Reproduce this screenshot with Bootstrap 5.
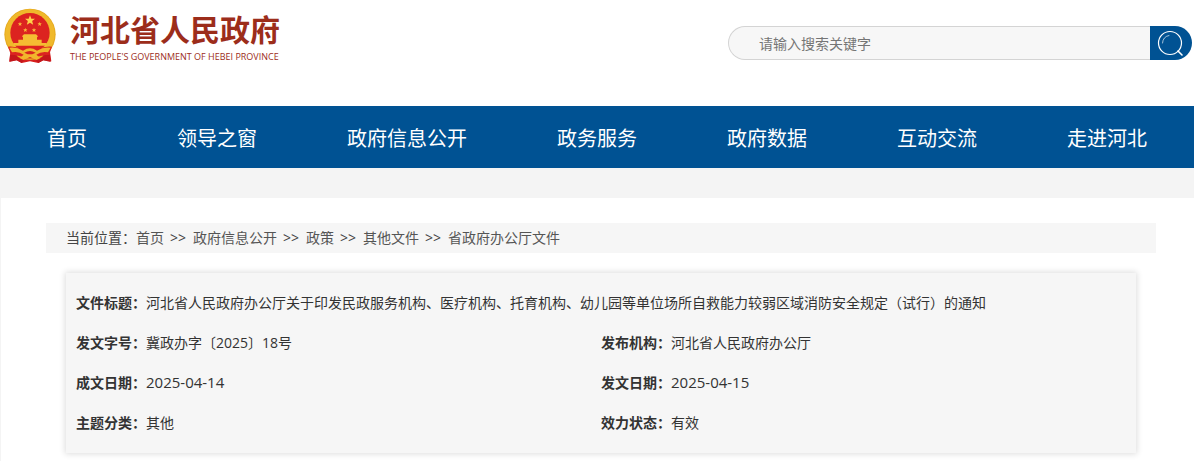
<!DOCTYPE html>
<html lang="zh-CN">
<head>
<meta charset="utf-8">
<meta name="viewport" content="width=device-width, initial-scale=1">
<title>河北省人民政府</title>
<link href="https://cdn.jsdelivr.net/npm/bootstrap@5.3.0/dist/css/bootstrap.min.css" rel="stylesheet">
<style>
  body { background: #f4f4f4; color: #333; font: 14px/30px "Open Sans", "Noto Sans CJK SC", sans-serif; }
  a { text-decoration: none; }
  .site-head { min-height: 106px; }
  .site-name { font-size: 30px; line-height: 34px; font-weight: 700; color: #9c2d1b; margin-top: 13px; }
  .site-sub { font-size: 9px; line-height: 20px; font-weight: 500; color: #9c2d1b; }
  .emblem { width: 70px; height: 70px; }
  .search { flex: 0 1 464px; height: 34px; margin: 26px 2px 0 0; }
  .search .form-control { background: #f7f7f7; border: 1px solid #d4d4d4; border-right: 0; border-radius: 17px 0 0 17px; padding: 0 30px; font-size: 14px; color: #555; }
  .search .form-control::placeholder { color: #757575; }
  .search .btn { width: 42px; background: #005293; border-radius: 0 17px 17px 0; }
  .main-nav { background: #005293; }
  .main-nav ul { column-gap: 90px; }
  .main-nav a { display: block; font-size: 20px; line-height: 58px; padding-top: 4px; color: #fff; }
  .panel { margin: 30px 0 0 1px; padding: 25px 38px 20px 45px; background: #fff; }
  .crumbs { background: #f6f6f6; padding: 0 20px; color: #444; }
  .crumbs a { color: #555; }
  .crumb-sep { padding: 0 7px 0 6px; }
  .doc-info { margin: 20px 20px 0 20px; padding: 10px; background: #f6f6f6; box-shadow: 0 0 6px 1px #ddd; line-height: 40px; }
  .date { font-size: 15px; line-height: 20px; }
</style>
</head>
<body>
<header class="site-head bg-white d-flex justify-content-between align-items-start">
  <a href="#" class="d-flex">
    <svg class="emblem" viewBox="0 0 210 210" aria-hidden="true">
      <path d="M33 142L28 184L50 181L65 189L90 184L115 189L130 181L154 184L148 142Z" fill="#d71f1d"/>
      <circle cx="90" cy="103" r="77" fill="#e5a91f"/>
      <circle cx="90" cy="102" r="74" fill="#f0b92b"/>
      <circle cx="90" cy="98" r="59" fill="#dc2320"/>
      <path d="M90 46l4 10h11l-8.500 7 3 11-9.500-6-9.500 6 3-11-8.500-7h11z" fill="#ffd24a"/>
      <path id="s" d="M60 65l1.500 5h5l-3.500 3 1 5-4-3-4 3 1-5-3.500-3h5z" fill="#f9b93a"/>
      <use href="#s" x="59"/><use href="#s" x="16" y="18"/><use href="#s" x="42" y="18"/>
      <path d="M66 109l6-6h36l6 6-3 3v7h14v10h15v8H40v-8h15v-10h14v-7z" fill="#f5bd32"/>
      <path d="M24 140Q48 138 67 149Q90 138 113 149Q132 138 156 140L146 168Q124 164 111 172Q90 179 69 172Q56 164 34 168Z" fill="#dc2320"/>
      <path d="M28 143Q50 140 69 152Q90 138 111 152Q130 140 152 143L144 157Q124 153 109 164L121 174L110 180L90 171L70 180L59 174L71 164Q56 153 36 157Z" fill="#f2b62c"/>
      <path d="M73 158Q90 148 107 158L97 163H83Z" fill="#d8241e"/>
      <path d="M30 164L28 186L50 181L65 189L72 181Q56 180 50 166ZM150 164L152 186L130 181L115 189L108 181Q124 180 130 166Z" fill="#c4161b"/>
    </svg>
    <span class="d-flex flex-column text-nowrap">
      <span class="site-name">河北省人民政府</span>
      <span class="site-sub">THE PEOPLE'S GOVERNMENT OF HEBEI PROVINCE</span>
    </span>
  </a>
  <form class="search d-flex" role="search">
    <input class="form-control shadow-none" type="text" placeholder="请输入搜索关键字" aria-label="请输入搜索关键字">
    <button class="btn p-0 border-0 flex-shrink-0 d-flex align-items-center justify-content-center" type="button" aria-label="搜索">
      <svg width="28" height="28" viewBox="0 0 28 28" fill="none" stroke="#fff" stroke-linecap="round">
        <circle cx="13" cy="14" r="11.500" stroke-width="1.200"/>
        <path d="M5.500 14Q6 7.500 12 6.500" stroke-width=".8" opacity=".8"/>
        <path d="M21 22L25 26" stroke-width="1.600"/>
      </svg>
    </button>
  </form>
</header>
<nav class="main-nav">
  <ul class="list-unstyled d-flex flex-wrap justify-content-center mb-0">
    <li><a href="#">首页</a></li>
    <li><a href="#">领导之窗</a></li>
    <li><a href="#">政府信息公开</a></li>
    <li><a href="#">政务服务</a></li>
    <li><a href="#">政府数据</a></li>
    <li><a href="#">互动交流</a></li>
    <li><a href="#">走进河北</a></li>
  </ul>
</nav>
<main class="panel">
  <nav class="crumbs d-flex flex-wrap" aria-label="当前位置">
    <span>当前位置：</span><a href="#">首页</a><span class="crumb-sep">&gt;&gt;</span><a href="#">政府信息公开</a><span class="crumb-sep">&gt;&gt;</span><a href="#">政策</a><span class="crumb-sep">&gt;&gt;</span><a href="#">其他文件</a><span class="crumb-sep">&gt;&gt;</span><a href="#">省政府办公厅文件</a>
  </nav>
  <section class="doc-info">
    <div class="row g-0">
      <div class="col-12"><b>文件标题：</b>河北省人民政府办公厅关于印发民政服务机构、医疗机构、托育机构、幼儿园等单位场所自救能力较弱区域消防安全规定（试行）的通知</div>
      <div class="col-6"><b>发文字号：</b>冀政办字〔2025〕18号</div>
      <div class="col-6"><b>发布机构：</b>河北省人民政府办公厅</div>
      <div class="col-6"><b>成文日期：</b><span class="date">2025-04-14</span></div>
      <div class="col-6"><b>发文日期：</b><span class="date">2025-04-15</span></div>
      <div class="col-6"><b>主题分类：</b>其他</div>
      <div class="col-6"><b>效力状态：</b>有效</div>
    </div>
  </section>
</main>
<script src="https://cdn.jsdelivr.net/npm/bootstrap@5.3.0/dist/js/bootstrap.bundle.min.js"></script>
</body>
</html>
